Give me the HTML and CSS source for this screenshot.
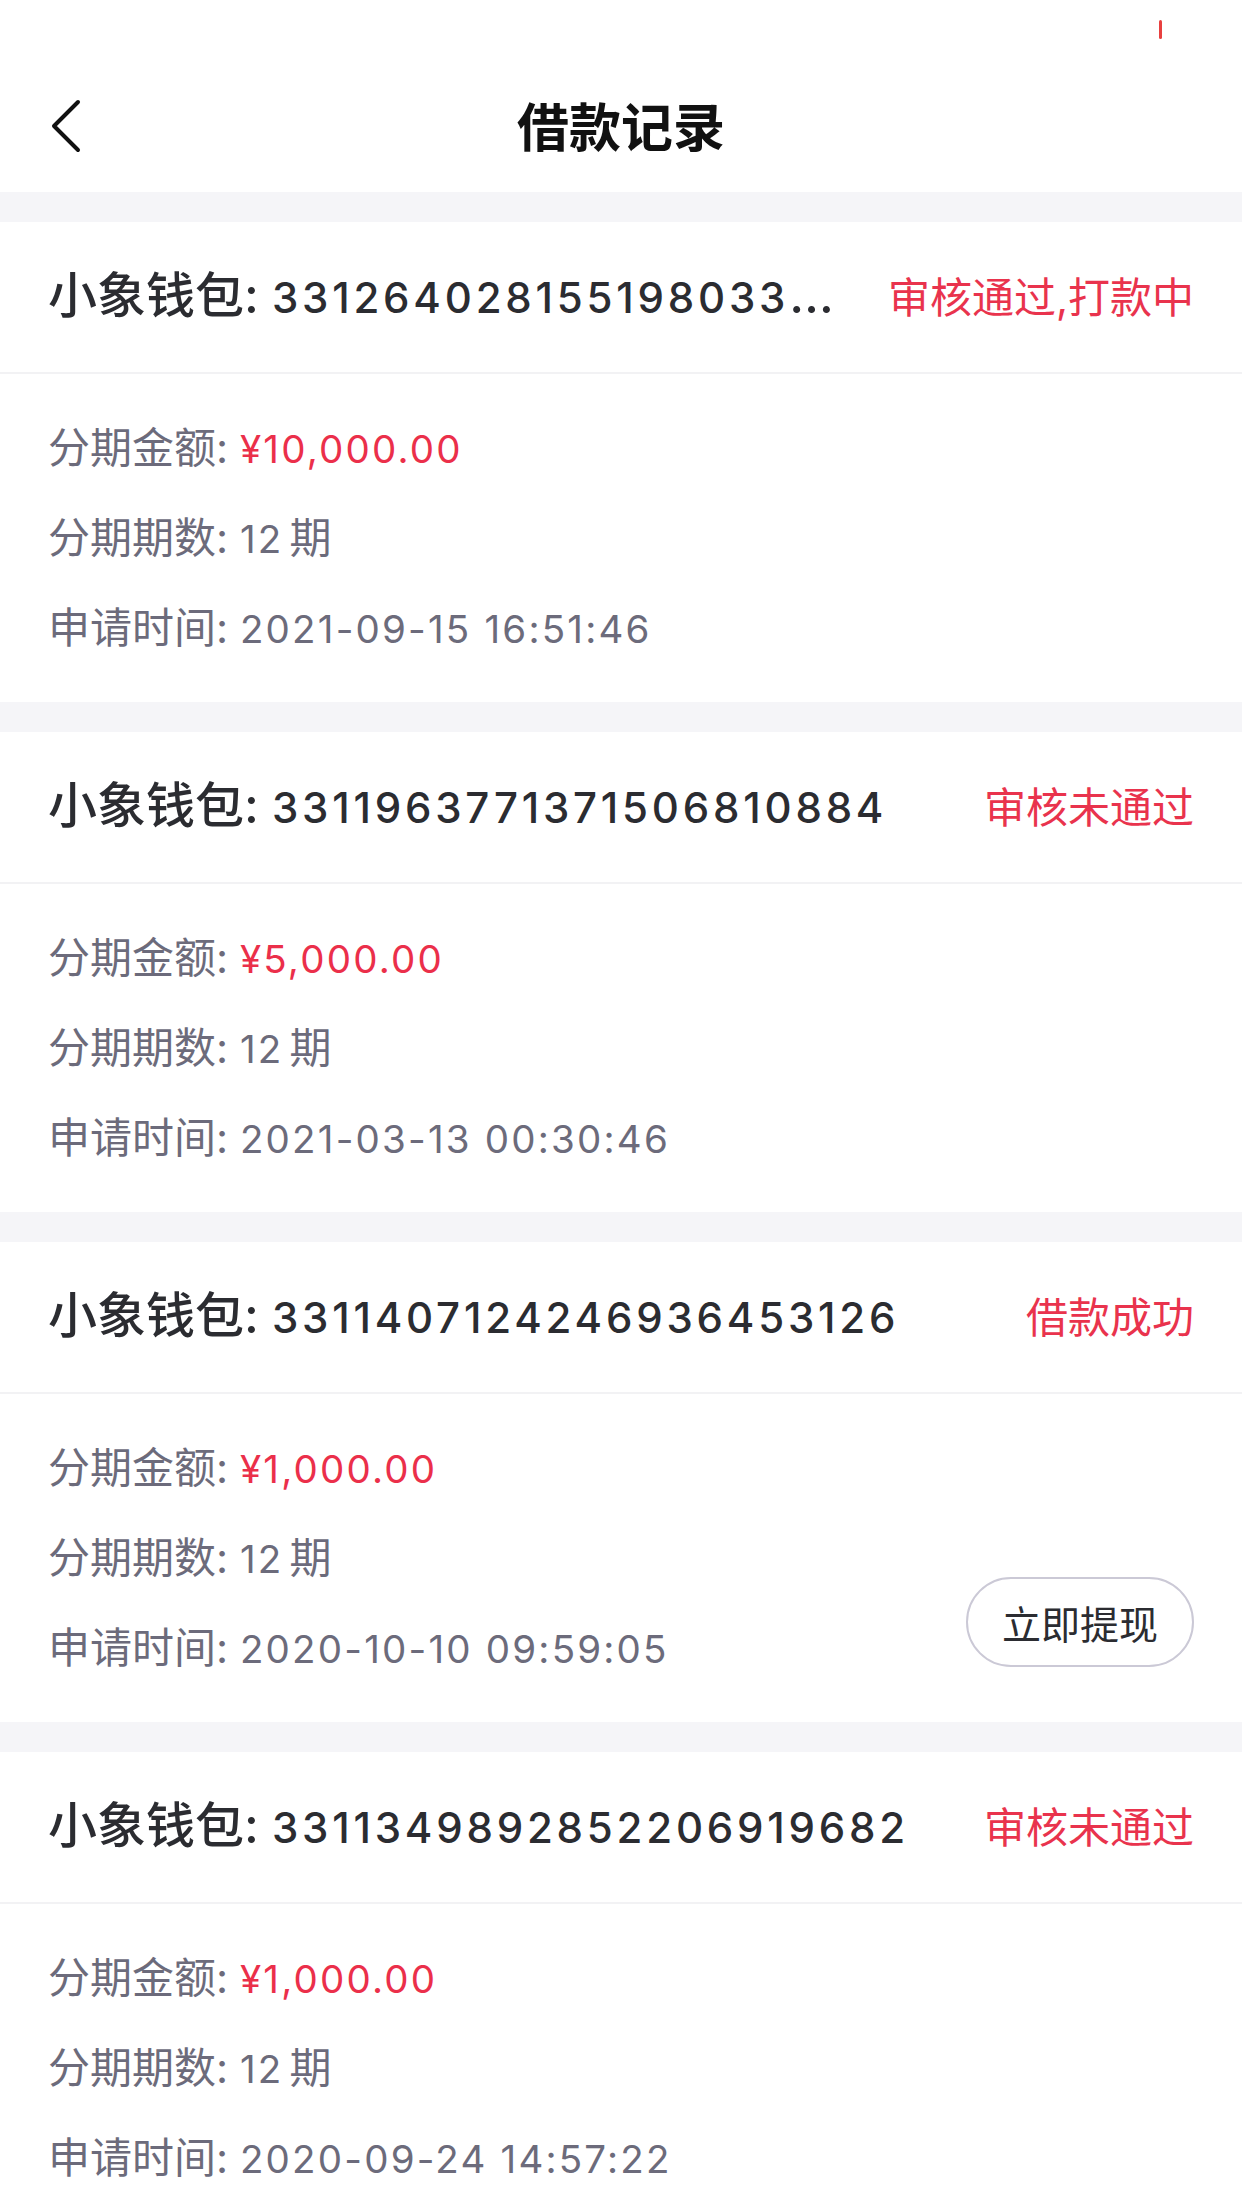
FILE: index.html
```html
<!DOCTYPE html>
<html lang="zh-CN">
<head>
    <meta charset="UTF-8">
    <meta name="viewport" content="width=device-width, initial-scale=1.0">
    <title>借款记录</title>
    <link rel="stylesheet" href="styles.css">
</head>
<body>
    <div class="status-bar"><span class="rec"></span></div>

    <div class="nav">
        <a class="back" href="#">
            <svg width="40" height="56" viewBox="0 0 40 56">
                <polyline points="30,4 6,28 30,52" fill="none" stroke="#111" stroke-width="4" stroke-linecap="round" stroke-linejoin="round"/>
            </svg>
        </a>
        <h1>借款记录</h1>
        <span></span>
    </div>

    <div class="list">
        <div class="card">
            <div class="card-head">
                <div class="order">小象钱包: <span class="num">3312640281551980338765</span></div>
                <div class="state">审核通过,打款中</div>
            </div>
            <div class="card-body">
                <div class="rows">
                    <div class="row">分期金额: <span class="num amount">¥10,000.00</span></div>
                    <div class="row">分期期数: <span class="num">12</span><span class="unit">期</span></div>
                    <div class="row">申请时间: <span class="num">2021-09-15 16:51:46</span></div>
                </div>
            </div>
        </div>

        <div class="card">
            <div class="card-head">
                <div class="order">小象钱包: <span class="num">3311963771371506810884</span></div>
                <div class="state">审核未通过</div>
            </div>
            <div class="card-body">
                <div class="rows">
                    <div class="row">分期金额: <span class="num amount">¥5,000.00</span></div>
                    <div class="row">分期期数: <span class="num">12</span><span class="unit">期</span></div>
                    <div class="row">申请时间: <span class="num">2021-03-13 00:30:46</span></div>
                </div>
            </div>
        </div>

        <div class="card">
            <div class="card-head">
                <div class="order">小象钱包: <span class="num">3311407124246936453126</span></div>
                <div class="state">借款成功</div>
            </div>
            <div class="card-body">
                <div class="rows">
                    <div class="row">分期金额: <span class="num amount">¥1,000.00</span></div>
                    <div class="row">分期期数: <span class="num">12</span><span class="unit">期</span></div>
                    <div class="row">申请时间: <span class="num">2020-10-10 09:59:05</span></div>
                </div>
                <button class="withdraw" type="button">立即提现</button>
            </div>
        </div>

        <div class="card">
            <div class="card-head">
                <div class="order">小象钱包: <span class="num">3311349892852206919682</span></div>
                <div class="state">审核未通过</div>
            </div>
            <div class="card-body">
                <div class="rows">
                    <div class="row">分期金额: <span class="num amount">¥1,000.00</span></div>
                    <div class="row">分期期数: <span class="num">12</span><span class="unit">期</span></div>
                    <div class="row">申请时间: <span class="num">2020-09-24 14:57:22</span></div>
                </div>
            </div>
        </div>
    </div>
</body>
</html>
```

FILE: styles.css
```css
body {
    margin: 0;
    padding: 0;
    background-color: #f5f5f8;
    font-family: Inter, "Noto Sans CJK SC", sans-serif;
    color: #2b2c31;
}

.status-bar {
    height: 60px;
    background-color: white;
    display: flex;
    justify-content: flex-end;
    align-items: flex-start;
    padding: 20px 80px 0 0;
    box-sizing: border-box;
}

.rec {
    width: 3px;
    height: 19px;
    background-color: #e8403f;
    border-radius: 2px;
}

.nav {
    height: 132px;
    background-color: white;
    display: grid;
    grid-template-columns: 1fr auto 1fr;
    align-items: center;
    padding-bottom: 4px;
    box-sizing: border-box;
}

.back {
    display: flex;
    padding: 4px 0 0 48px;
}

.nav h1 {
    margin: 0;
    font-size: 52px;
    font-weight: 700;
    color: #111;
    font-family: "Noto Sans CJK SC", sans-serif;
}

.list {
    display: flex;
    flex-direction: column;
    gap: 30px;
    padding-top: 30px;
}

.card {
    background-color: white;
}

.card-head {
    height: 152px;
    display: flex;
    align-items: center;
    padding: 0 48px 6px;
    box-sizing: border-box;
    border-bottom: 2px solid #f2f2f4;
}

.order {
    flex: 1;
    min-width: 0;
    margin-right: 48px;
    padding-bottom: 5px;
    font-size: 49px;
    font-weight: 500;
    white-space: nowrap;
    overflow: hidden;
    text-overflow: ellipsis;
}

.order .num {
    font-size: 42px;
    letter-spacing: 3.8px;
}

.state {
    font-size: 42px;
    color: #e9334d;
    white-space: nowrap;
}

.card-body {
    display: flex;
    justify-content: space-between;
    align-items: flex-end;
    padding: 29px 48px;
}

.row {
    height: 90px;
    line-height: 90px;
    font-size: 42px;
    color: #6c6b7b;
}

.row .num {
    font-size: 38.5px;
    letter-spacing: 2.2px;
}

.unit {
    margin-left: 6px;
}

.amount {
    color: #eb2f4a;
}

.withdraw {
    width: 228px;
    height: 90px;
    margin-bottom: 26px;
    border: 2px solid #cbc9d6;
    border-radius: 45px;
    background-color: white;
    font-family: "Noto Sans CJK SC", sans-serif;
    font-size: 39px;
    color: #2b2c31;
    padding: 0;
}
```
